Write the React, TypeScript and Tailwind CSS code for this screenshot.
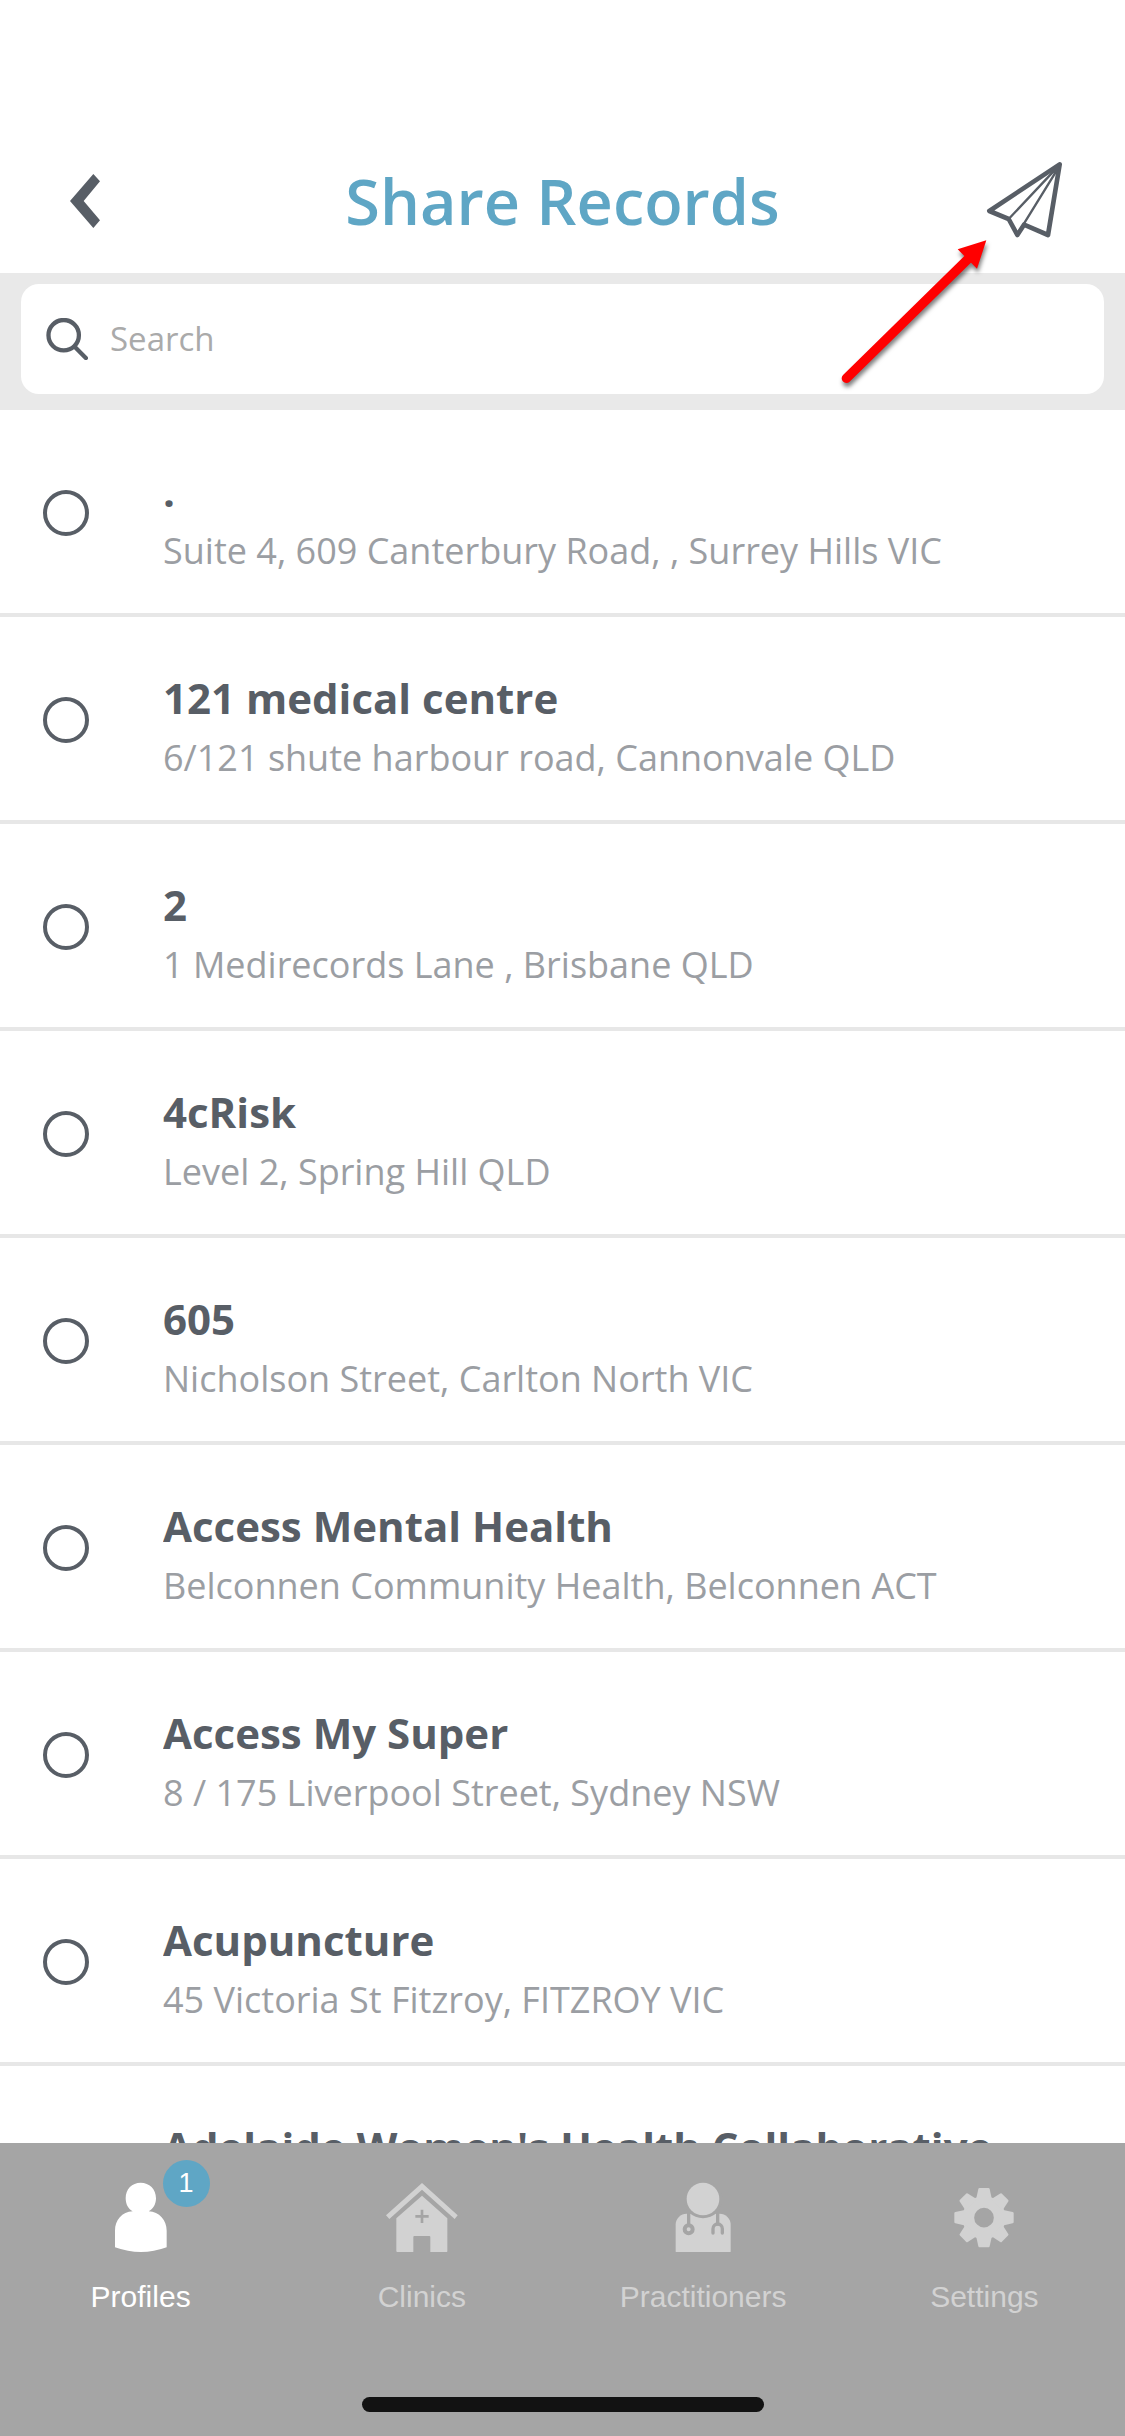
import React, { useState } from 'react';
import clsx from 'clsx';

const clinics = [
  { id: 1, name: '.', address: 'Suite 4, 609 Canterbury Road, , Surrey Hills VIC' },
  { id: 2, name: '121 medical centre', address: '6/121 shute harbour road, Cannonvale QLD' },
  { id: 3, name: '2', address: '1 Medirecords Lane , Brisbane QLD' },
  { id: 4, name: '4cRisk', address: 'Level 2, Spring Hill QLD' },
  { id: 5, name: '605', address: 'Nicholson Street, Carlton North VIC' },
  { id: 6, name: 'Access Mental Health', address: 'Belconnen Community Health, Belconnen ACT' },
  { id: 7, name: 'Access My Super', address: '8 / 175 Liverpool Street, Sydney NSW' },
  { id: 8, name: 'Acupuncture', address: '45 Victoria St Fitzroy, FITZROY VIC' },
  { id: 9, name: "Adelaide Women's Health Collaborative", address: '' },
];

function BackIcon() {
  return (
    <svg viewBox="210 162 90 162" className="h-[54px] w-[30px]" fill="currentColor" aria-hidden="true">
      <path d="M280 162l20 22-49 59 49 58-20 23-70-81z" />
    </svg>
  );
}

function PlaneIcon() {
  return (
    <svg
      viewBox="705 126 234 234"
      className="size-[78px]"
      fill="none"
      stroke="currentColor"
      strokeLinejoin="round"
      aria-hidden="true"
    >
      <path d="M929 133L718 273l58 24 26 48 20-31 72 31z" strokeWidth="14" />
      <path d="M776 297L924 140M820 314L926 142" strokeWidth="7" />
    </svg>
  );
}

function SearchIcon() {
  return (
    <svg
      viewBox="139 593 126 127"
      className="size-[42px]"
      fill="none"
      stroke="currentColor"
      strokeWidth="13"
      strokeLinecap="round"
      aria-hidden="true"
    >
      <circle cx="192" cy="645" r="46" />
      <path d="M226 681l33 33" />
    </svg>
  );
}

function ArrowIcon() {
  return (
    <svg viewBox="260 350 459 459" className="size-[153px] overflow-visible drop-shadow-[1px_4px_2px_rgba(0,0,0,0.5)]" aria-hidden="true">
      <path d="M288 774L655 414" stroke="#ff0000" strokeWidth="28" strokeLinecap="round" />
      <path d="M708 360l-86 27 58 58z" fill="#ff0000" />
    </svg>
  );
}

function ProfileIcon() {
  return (
    <svg viewBox="75 184 210 210" className="size-[70px]" fill="currentColor" aria-hidden="true">
      <path d="M155 272C141 264 134 250 134 233c0-28 19-47 45-47s46 19 46 47c0 17-8 31-22 39 32 2 54 26 54 58v50q-77 28-155 0v-50c0-32 21-56 53-58z" />
    </svg>
  );
}

function ClinicIcon() {
  return (
    <svg viewBox="923 184 216 210" className="h-[70px] w-[72px]" fill="currentColor" aria-hidden="true">
      <path d="M1031 187l107 97-9 11-98-88-98 88-10-11z" />
      <path
        fillRule="evenodd"
        d="M1031 225l76 68v99q0 2-2 2h-49v-45q0-3-3-3h-45q-3 0-3 3v45h-48q-3 0-3-3v-98zM1027 267v16h-16v8h16v16h8v-16h16v-8h-16v-16z"
      />
    </svg>
  );
}

function PractitionerIcon() {
  return (
    <svg viewBox="262 184 210 210" className="size-[70px]" fill="none" aria-hidden="true">
      <path d="M285 392v-80a33 33 0 0 1 33-33h99a33 33 0 0 1 33 33v80q0 3-3 3H288q-3 0-3-3z" fill="currentColor" />
      <circle cx="367" cy="235" r="58" fill="#a5a5a5" />
      <circle cx="367" cy="235" r="49" fill="currentColor" />
      <g stroke="#a5a5a5" strokeWidth="10" strokeLinecap="round">
        <path d="M324 276v34M411 276v34" />
        <path d="M397 337v-13a14 14 0 0 1 28 0v13" />
        <circle cx="324" cy="326" r="12" strokeWidth="12" />
      </g>
    </svg>
  );
}

function SettingsIcon() {
  return (
    <svg viewBox="-105 -107 210 210" className="size-[70px]" fill="currentColor" aria-hidden="true">
      <circle r="47" fill="none" stroke="currentColor" strokeWidth="35" />
      {[0, 45, 90, 135, 180, 225, 270, 315].map((angle) => (
        <path key={angle} d="M-24-54l7-32q1-3 3-3h28q2 0 3 3l7 32z" transform={`rotate(${angle})`} />
      ))}
    </svg>
  );
}

const tabs = [
  { label: 'Profiles', icon: ProfileIcon, badge: 1 },
  { label: 'Clinics', icon: ClinicIcon },
  { label: 'Practitioners', icon: PractitionerIcon },
  { label: 'Settings', icon: SettingsIcon },
];

function App() {
  const [selected, setSelected] = useState<number | null>(null);
  const [activeTab, setActiveTab] = useState('Profiles');

  return (
    <div className="flex h-screen flex-col bg-white font-['Open_Sans',sans-serif] text-[#585e66]">
      <header className="grid grid-cols-[1fr_auto_1fr] items-center px-[62px] pt-[129px]">
        <button type="button" aria-label="Back" className="justify-self-start pl-2">
          <BackIcon />
        </button>
        <h1 className="text-[63px] leading-[144px] font-semibold text-[#5fa6c5]">Share Records</h1>
        <button type="button" aria-label="Send" className="justify-self-end">
          <PlaneIcon />
        </button>
      </header>

      <div className="relative bg-[#e9e9e9] px-[21px] pt-[11px] pb-4">
        <label className="flex h-[110px] items-center gap-[22px] rounded-[18px] bg-white px-[25px]">
          <SearchIcon />
          <input
            type="text"
            placeholder="Search"
            aria-label="Search"
            className="min-w-0 flex-1 bg-transparent text-[33px] outline-none placeholder:text-[#aaaaaa]"
          />
        </label>
        <div className="pointer-events-none absolute -top-9 right-[135px] z-10">
          <ArrowIcon />
        </div>
      </div>

      <ul className="min-h-0 flex-1 overflow-y-auto [scrollbar-width:none]">
        {clinics.map((clinic) => (
          <li key={clinic.id} className="border-b-4 border-[#e7e7e7]">
            <label className="flex items-center gap-[74px] pt-0.5 pr-6 pl-[43px]">
              <input
                type="radio"
                name="clinic"
                checked={selected === clinic.id}
                onChange={() => setSelected(clinic.id)}
                className="size-[46px] shrink-0 appearance-none rounded-full border-4 border-[#585e66] checked:bg-[#5fa6c5]"
              />
              <span className="flex min-w-0 flex-col gap-[7px] pt-[50px] pb-[38px]">
                <span className="truncate text-[42px] leading-[57px] font-bold">{clinic.name}</span>
                <span className="min-h-[49px] truncate text-[36px] leading-[49px] text-[#9b9ea3]">{clinic.address}</span>
              </span>
            </label>
          </li>
        ))}
      </ul>

      <nav className="bg-[#a5a5a5] pt-[39px] pb-6 font-['Liberation_Sans',Arial,sans-serif]">
        <div className="grid grid-cols-4">
          {tabs.map(({ label, icon: Icon, badge }) => (
            <button
              key={label}
              type="button"
              onClick={() => setActiveTab(label)}
              className={clsx(
                'flex flex-col items-center gap-[27px]',
                activeTab === label ? 'text-white' : 'text-[#d2d2d2]'
              )}
            >
              <span className="relative">
                <Icon />
                {badge && (
                  <span className="absolute -top-[22px] left-[57px] flex size-[47px] items-center justify-center rounded-full bg-[#5fa6c5] text-[27px] text-white">
                    {badge}
                  </span>
                )}
              </span>
              <span className="text-[30px] leading-9">{label}</span>
            </button>
          ))}
        </div>
        <div className="mx-auto mt-[82px] h-[15px] w-[402px] rounded-full bg-[#121212]" />
      </nav>
    </div>
  );
}

export default App;
